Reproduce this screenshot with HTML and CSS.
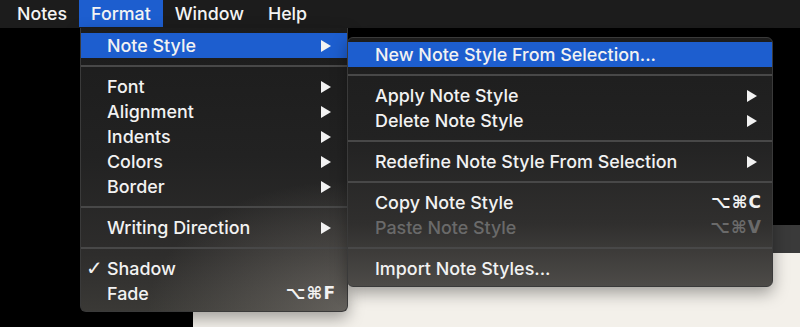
FILE: index.html
```html
<!DOCTYPE html>
<html>
<head>
<meta charset="utf-8">
<link rel="stylesheet" href="styles.css">
</head>
<body>
<div class="screen">
  <nav class="menubar">
    <span class="mb-item">Notes</span>
    <span class="mb-item active">Format</span>
    <span class="mb-item">Window</span>
    <span class="mb-item">Help</span>
  </nav>
  <div class="desktop">
    <div class="window">
      <div class="toolbar"></div>
      <div class="doc"></div>
    </div>
  </div>

  <div class="menu format-menu">
    <div class="row hl"><span class="label">Note Style</span><svg class="arrow" viewBox="0 0 10 12"><path d="M0 0L10 6L0 12Z"/></svg></div>
    <div class="sep"></div>
    <div class="row"><span class="label">Font</span><svg class="arrow" viewBox="0 0 10 12"><path d="M0 0L10 6L0 12Z"/></svg></div>
    <div class="row"><span class="label">Alignment</span><svg class="arrow" viewBox="0 0 10 12"><path d="M0 0L10 6L0 12Z"/></svg></div>
    <div class="row"><span class="label">Indents</span><svg class="arrow" viewBox="0 0 10 12"><path d="M0 0L10 6L0 12Z"/></svg></div>
    <div class="row"><span class="label">Colors</span><svg class="arrow" viewBox="0 0 10 12"><path d="M0 0L10 6L0 12Z"/></svg></div>
    <div class="row"><span class="label">Border</span><svg class="arrow" viewBox="0 0 10 12"><path d="M0 0L10 6L0 12Z"/></svg></div>
    <div class="sep"></div>
    <div class="row"><span class="label">Writing Direction</span><svg class="arrow" viewBox="0 0 10 12"><path d="M0 0L10 6L0 12Z"/></svg></div>
    <div class="sep"></div>
    <div class="row"><span class="check">✓</span><span class="label">Shadow</span></div>
    <div class="row"><span class="label">Fade</span><span class="key">⌥⌘F</span></div>
  </div>

  <div class="menu sub-menu">
    <div class="row hl"><span class="label">New Note Style From Selection...</span></div>
    <div class="sep"></div>
    <div class="row"><span class="label">Apply Note Style</span><svg class="arrow" viewBox="0 0 10 12"><path d="M0 0L10 6L0 12Z"/></svg></div>
    <div class="row"><span class="label">Delete Note Style</span><svg class="arrow" viewBox="0 0 10 12"><path d="M0 0L10 6L0 12Z"/></svg></div>
    <div class="sep"></div>
    <div class="row"><span class="label">Redefine Note Style From Selection</span><svg class="arrow" viewBox="0 0 10 12"><path d="M0 0L10 6L0 12Z"/></svg></div>
    <div class="sep"></div>
    <div class="row"><span class="label">Copy Note Style</span><span class="key">⌥⌘C</span></div>
    <div class="row disabled"><span class="label">Paste Note Style</span><span class="key">⌥⌘V</span></div>
    <div class="sep"></div>
    <div class="row"><span class="label">Import Note Styles...</span></div>
  </div>
</div>
</body>
</html>
```
FILE: styles.css
```css
* { box-sizing: border-box; }
html, body { margin: 0; padding: 0; }
body {
  width: 800px;
  height: 327px;
  overflow: hidden;
  background: #000;
  font-family: "Inter", "DejaVu Sans", sans-serif;
  font-size: 17.5px;
  font-weight: 500;
  color: #f2f2f2;
}
.screen {
  position: relative;
  width: 800px;
  height: 327px;
  display: flex;
  flex-direction: column;
}
.menubar {
  height: 28px;
  background: #1c1c1c;
  display: flex;
  padding-left: 5px;
  flex: none;
}
.mb-item {
  padding: 0 12px;
  line-height: 28px;
  height: 27px;
  color: #f4f4f4;
  font-size: 17.8px;
}
.mb-item.active { background: #1d5ecf; }
.desktop {
  flex: 1;
  padding: 197px 0 0 193px;
  display: flex;
}
.window {
  flex: 1;
  display: flex;
  flex-direction: column;
}
.toolbar {
  height: 28px;
  background: #3a3a3a;
}
.doc {
  flex: 1;
  background: #f3f0ea;
}
.menu {
  position: absolute;
  display: flex;
  flex-direction: column;
  box-shadow: 0 6px 16px rgba(0,0,0,0.35);
  font-size: 17.9px;
}
.format-menu {
  left: 80px;
  top: 28px;
  width: 268px;
  height: 284px;
  padding-top: 5px;
  border-radius: 0 0 6px 6px;
  border: 1px solid #3a3a3a;
  border-top: none;
  background:
    radial-gradient(ellipse 200px 130px at 100% 100%, rgba(140,135,128,0.5), rgba(140,135,128,0) 100%),
    linear-gradient(to bottom, #1c1c1c 0%, #222 45%, #2e2d2c 80%, #3a3936 100%);
}
.sub-menu {
  left: 347px;
  top: 37px;
  width: 426px;
  height: 250px;
  padding-top: 4px;
  border-radius: 6px;
  border: 1px solid #3a3a3a;
  background: linear-gradient(to bottom, #1d1d1d 0%, #222 40%, #302f2e 75%, #4d4b48 100%);
}
.row {
  height: 25px;
  line-height: 25px;
  display: flex;
  align-items: center;
  position: relative;
  flex: none;
}
.format-menu .row { padding: 0 16px 0 26px; }
.sub-menu .row { padding: 0 15px 0 27px; }
.row.hl { background: #1d5ecf; }
.label { flex: 1; white-space: nowrap; }
.arrow {
  width: 10px;
  height: 12px;
  fill: #f2f2f2;
}
.key {
  font-family: "DejaVu Sans", sans-serif;
  font-size: 17px;
  font-weight: bold;
  letter-spacing: 1px;
  margin-right: -5px;
}
.check {
  position: absolute;
  left: 5px;
  font-family: "DejaVu Sans", sans-serif;
  font-size: 20px;
  font-weight: bold;
}
.disabled { color: #6a6a6a; }
.sep {
  height: 16px;
  flex: none;
  display: flex;
  align-items: center;
}
.sep::before {
  content: "";
  display: block;
  width: 100%;
  height: 2px;
  background: #484848;
}
```
